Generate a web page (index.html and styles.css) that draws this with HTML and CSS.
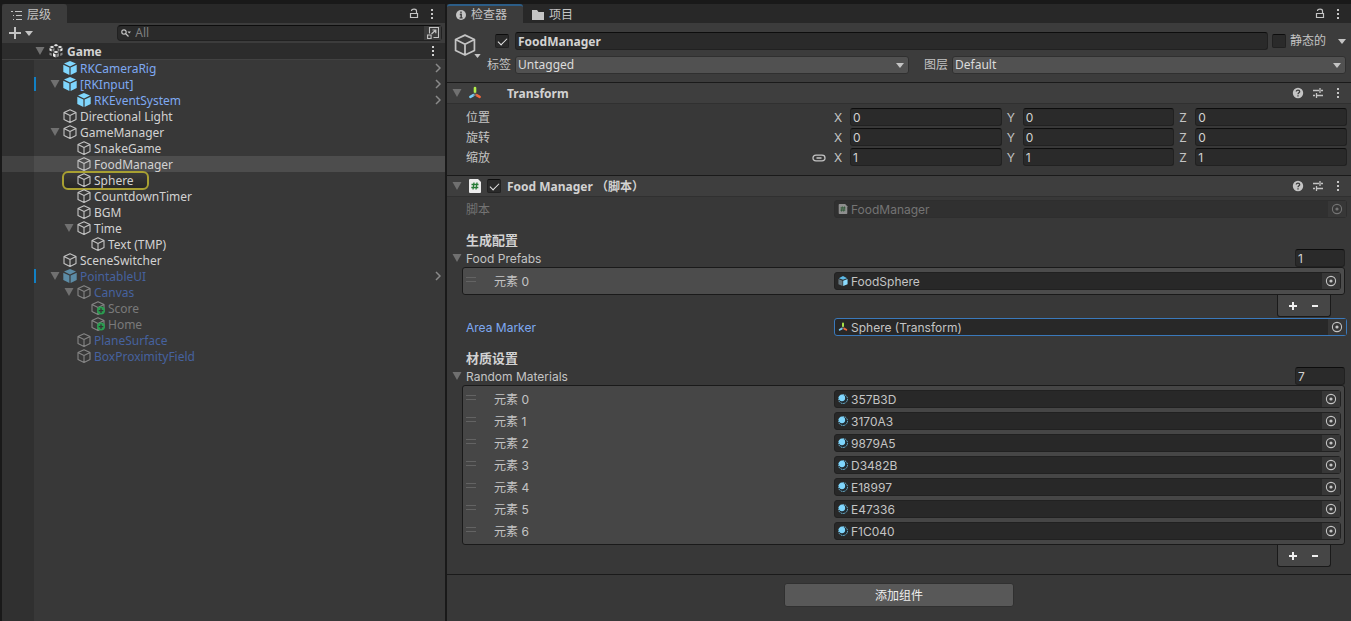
FILE: index.html
```html
<!DOCTYPE html>
<html lang="zh-CN">
<head>
  <meta charset="UTF-8">
  <title>Game</title>
  <meta name="viewport" content="width=device-width, initial-scale=1.0">
  <link rel="stylesheet" href="styles.css">
</head>
<body>
  <!-- shared icons -->
  <svg class="sprite" aria-hidden="true">
    <symbol id="i-tri" viewBox="0 0 10 10"><path d="M0.5 1h9L5 9z" fill="currentColor"/></symbol>
    <symbol id="i-down" viewBox="0 0 8 5"><path d="M0 0h8L4 5z" fill="currentColor"/></symbol>
    <symbol id="i-cube" viewBox="0 0 14 14"><path d="M7 0.7l6 2.8v7L7 13.4 1 10.5v-7zM1 3.5l6 3 6-3M7 6.5v6.9" fill="none" stroke="currentColor" stroke-width="1.1" stroke-linejoin="round"/></symbol>
    <symbol id="i-prefab" viewBox="0 0 14 14"><path d="M7 0l6 2.6-6 2.9-6-2.9z" fill="currentColor"/><path d="M0.3 3.7l6.1 2.9V14l-6.1-2.9zM13.7 3.7L7.6 6.6V14l6.1-2.9z" fill="currentColor"/></symbol>
    <symbol id="i-added" viewBox="0 0 14 14"><use href="#i-cube"/><circle cx="10" cy="9.6" r="4" fill="#2a9d50"/><path d="M10 7.3v4.6M7.7 9.6h4.6" stroke="#343434" stroke-width="1.3"/></symbol>
    <symbol id="i-scene" viewBox="0 0 14 14"><path d="M7 0l2.500 1.200L7 2.500 4.500 1.200zM4 8l3-1.300L10 8 7 9.300zM0.500 3L3 1.800 5.500 3 3 4.300zM8.500 3L11 1.800 13.500 3 11 4.300z" fill="#e4e4e4"/><path d="M0.500 4l2.200 1.100v2.500L0.500 6.500zM13.500 4l-2.200 1.100v2.500l2.200-1.100zM4 9l2.600 1.200v3.300L4 12.300z" fill="#f0f0f0"/><path d="M5.500 4L3.500 5.100v2.500l2-1.100zM8.500 4l2 1.100v2.500l-2-1.100zM10 9l-2.600 1.200v3.300l2.600-1.200zM0.500 8.500l2.300 1.100v2.400L0.500 11zM13.500 8.500l-2.300 1.100v2.400l2.300-1z" fill="#888"/></symbol>
    <symbol id="i-dots" viewBox="0 0 4 12"><path d="M1 1h2v2H1zM1 5h2v2H1zM1 9h2v2H1z" fill="currentColor"/></symbol>
    <symbol id="i-lock" viewBox="0 0 10 12"><path d="M1.500 5.500h7v4h-7zM2.500 3C2.500 0.500 7.500 0.500 7.500 3v2.500" fill="none" stroke="currentColor" stroke-width="1.200"/></symbol>
    <symbol id="i-next" viewBox="0 0 6 10"><path d="M1 1l4 4-4 4" fill="none" stroke="currentColor" stroke-width="1.500"/></symbol>
    <symbol id="i-axes" viewBox="0 0 14 14"><path d="M7 2v4" stroke="#b4f04a" stroke-width="2.600" stroke-linecap="round"/><path d="M5.400 9.200L2.400 10.800" stroke="#78cdf5" stroke-width="2.600" stroke-linecap="round"/><path d="M8.600 9.200l3 1.600" stroke="#f4683c" stroke-width="2.600" stroke-linecap="round"/><path d="M7 6v2.300l-2 1.200M7 8.300l2 1.200" fill="none" stroke="#777" stroke-width="0.600"/></symbol>
    <symbol id="i-script" viewBox="0 0 12 14"><path d="M0 1q0-1 1-1h8l3 3v10q0 1-1 1H1q-1 0-1-1z" fill="#ececec"/><path d="M5 3.500L4 10.500M8 3.500L7 10.500M2.500 5.500h7M2.300 8.500h7" stroke="#267a35" stroke-width="1.300"/></symbol>
    <symbol id="i-help" viewBox="0 0 12 12"><circle cx="6" cy="6" r="5.200" fill="currentColor"/><path d="M4.300 4.600C4.300 2.500 7.700 2.600 7.700 4.600 7.700 5.900 6 5.800 6 7.300M6 8.200v1.300" fill="none" stroke="#3c3c3c" stroke-width="1.300"/></symbol>
    <symbol id="i-preset" viewBox="0 0 12 12"><path d="M1 3.500h6M9 3.500h2M8 1v5M1 8.500h2M5 8.500h6M4.500 6v5" fill="none" stroke="currentColor" stroke-width="1.300"/></symbol>
    <symbol id="i-pick" viewBox="0 0 12 12"><circle cx="6" cy="6" r="4.600" fill="none" stroke="currentColor" stroke-width="1.100"/><circle cx="6" cy="6" r="1.600" fill="currentColor"/></symbol>
    <symbol id="i-material" viewBox="0 0 12 12"><circle cx="6" cy="6" r="5.400" fill="#202a30" stroke="#7fd6fd" stroke-width="1" stroke-dasharray="2 1"/><circle cx="4.800" cy="4.800" r="3.800" fill="#7fd6fd"/></symbol>
    <symbol id="i-model" viewBox="0 0 12 12"><path d="M1 2.600L6 0l5 2.600-5 2z" fill="#5db9e6"/><path d="M0.500 3.500l5 2.200V12l-5-2.200z" fill="#66757c"/><path d="M6.200 5.700l5.300-2.200v6.300L6.200 12z" fill="#8bdcff"/></symbol>
    <symbol id="i-link" viewBox="0 0 14 8"><path d="M6 1.200H4Q1 1.200 1 4t3 2.800h2M8 1.200h2q3 0 3 2.800t-3 2.800H8M6 1.200h2M6 6.800h2M4.500 4h5" fill="none" stroke="currentColor" stroke-width="1.300"/></symbol>
    <symbol id="i-plus" viewBox="0 0 10 10"><path d="M5 1v8M1 5h8" stroke="currentColor" stroke-width="2"/></symbol>
    <symbol id="i-minus" viewBox="0 0 10 10"><path d="M2 5h6" stroke="currentColor" stroke-width="2"/></symbol>
  </svg>

  <div class="editor">
    <aside class="panel hierarchy">
      <div class="tabbar">
        <button class="tab active">
          <svg width="11" height="10" viewBox="0 0 11 10"><path d="M0 1.500h2M4 1.500h7M2 5.500h1M5 5.500h6M2 9.500h1M5 9.500h6" stroke="currentColor" stroke-width="1"/></svg>
          层级
        </button>
        <div class="tab-tools">
          <button aria-label="Lock"><svg width="10" height="12"><use href="#i-lock"/></svg></button>
          <button aria-label="Menu"><svg width="4" height="12"><use href="#i-dots"/></svg></button>
        </div>
      </div>

      <div class="toolbar">
        <button class="create" aria-label="Create">
          <svg width="12" height="12" viewBox="0 0 12 12"><path d="M6 0v12M0 6h12" stroke="currentColor" stroke-width="2"/></svg>
          <svg width="8" height="5"><use href="#i-down"/></svg>
        </button>
        <div class="search">
          <svg width="10" height="8" viewBox="0 0 10 8"><circle cx="3" cy="3" r="2.200" fill="none" stroke="currentColor" stroke-width="1.200"/><path d="M4.500 4.500L7.500 7.500" stroke="currentColor" stroke-width="1.300"/><path d="M6.500 2.500h3.500L8.200 4.500z" fill="currentColor"/></svg>
          <input type="text" placeholder="All" aria-label="Search">
          <button aria-label="Search window">
            <svg width="12" height="12" viewBox="0 0 12 12"><path d="M2.500 6.500v-6h9v10h-5" fill="none" stroke="currentColor" stroke-width="1.100"/><path d="M0.600 8h3.500v3.500H0.600z" fill="none" stroke="currentColor" stroke-width="1.100"/><path d="M4.500 7l4.300-4M5.500 3h3.300v3.300" fill="none" stroke="currentColor" stroke-width="1.200"/></svg>
          </button>
        </div>
      </div>

      <div class="scene">
        <svg class="fold" width="10" height="10"><use href="#i-tri"/></svg>
        <svg width="14" height="14"><use href="#i-scene"/></svg>
        <span>Game</span>
        <button aria-label="Scene menu"><svg width="4" height="12"><use href="#i-dots"/></svg></button>
      </div>

      <ul class="tree">
        <li class="prefab l1"><i class="fold"></i><svg class="icon"><use href="#i-prefab"/></svg><span>RKCameraRig</span><svg class="next"><use href="#i-next"/></svg></li>
        <li class="prefab l1 changed"><svg class="fold"><use href="#i-tri"/></svg><svg class="icon"><use href="#i-prefab"/></svg><span>[RKInput]</span><svg class="next"><use href="#i-next"/></svg></li>
        <li class="prefab l2"><i class="fold"></i><svg class="icon"><use href="#i-prefab"/></svg><span>RKEventSystem</span><svg class="next"><use href="#i-next"/></svg></li>
        <li class="l1"><i class="fold"></i><svg class="icon"><use href="#i-cube"/></svg><span>Directional Light</span></li>
        <li class="l1"><svg class="fold"><use href="#i-tri"/></svg><svg class="icon"><use href="#i-cube"/></svg><span>GameManager</span></li>
        <li class="l2"><i class="fold"></i><svg class="icon"><use href="#i-cube"/></svg><span>SnakeGame</span></li>
        <li class="l2 selected"><i class="fold"></i><svg class="icon"><use href="#i-cube"/></svg><span>FoodManager</span></li>
        <li class="l2 pinged"><i class="fold"></i><svg class="icon"><use href="#i-cube"/></svg><span>Sphere</span></li>
        <li class="l2"><i class="fold"></i><svg class="icon"><use href="#i-cube"/></svg><span>CountdownTimer</span></li>
        <li class="l2"><i class="fold"></i><svg class="icon"><use href="#i-cube"/></svg><span>BGM</span></li>
        <li class="l2"><svg class="fold"><use href="#i-tri"/></svg><svg class="icon"><use href="#i-cube"/></svg><span>Time</span></li>
        <li class="l3"><i class="fold"></i><svg class="icon"><use href="#i-cube"/></svg><span>Text (TMP)</span></li>
        <li class="l1"><i class="fold"></i><svg class="icon"><use href="#i-cube"/></svg><span>SceneSwitcher</span></li>
        <li class="prefab off l1 changed"><svg class="fold"><use href="#i-tri"/></svg><svg class="icon"><use href="#i-prefab"/></svg><span>PointableUI</span><svg class="next"><use href="#i-next"/></svg></li>
        <li class="child off l2"><svg class="fold"><use href="#i-tri"/></svg><svg class="icon"><use href="#i-cube"/></svg><span>Canvas</span></li>
        <li class="off l3"><i class="fold"></i><svg class="icon"><use href="#i-added"/></svg><span>Score</span></li>
        <li class="off l3"><i class="fold"></i><svg class="icon"><use href="#i-added"/></svg><span>Home</span></li>
        <li class="child off l2"><i class="fold"></i><svg class="icon"><use href="#i-cube"/></svg><span>PlaneSurface</span></li>
        <li class="child off l2"><i class="fold"></i><svg class="icon"><use href="#i-cube"/></svg><span>BoxProximityField</span></li>
      </ul>
    </aside>

    <main class="panel inspector">
      <div class="tabbar">
        <button class="tab active focused">
          <svg width="10" height="10" viewBox="0 0 10 10"><circle cx="5" cy="5" r="5" fill="currentColor"/><path d="M5 1.500v1.700M3.800 4.500h1.400v3.300M3.600 7.900h3" fill="none" stroke="#3c3c3c" stroke-width="1.400"/></svg>
          检查器
        </button>
        <button class="tab">
          <svg width="12" height="10" viewBox="0 0 12 10"><path d="M0 0h5l1.500 2H12v8H0z" fill="currentColor"/></svg>
          项目
        </button>
        <div class="tab-tools">
          <button aria-label="Lock"><svg width="10" height="12"><use href="#i-lock"/></svg></button>
          <button aria-label="Menu"><svg width="4" height="12"><use href="#i-dots"/></svg></button>
        </div>
      </div>

      <header class="object-header">
        <button class="object-icon" aria-label="Icon">
          <svg class="big" width="22" height="22"><use href="#i-cube"/></svg>
          <svg class="arrow" width="7" height="4"><use href="#i-down"/></svg>
        </button>
        <div class="object-main">
          <div class="name-row">
            <input type="checkbox" aria-label="Active" checked>
            <input type="text" class="field name" aria-label="Name" value="FoodManager">
            <input type="checkbox" id="static">
            <label for="static">静态的</label>
            <button aria-label="Static options"><svg width="8" height="5"><use href="#i-down"/></svg></button>
          </div>
          <div class="tag-row">
            <label for="tag">标签</label>
            <div class="dropdown">
              <select id="tag"><option>Untagged</option></select>
              <svg width="8" height="5"><use href="#i-down"/></svg>
            </div>
            <label for="layer">图层</label>
            <div class="dropdown">
              <select id="layer"><option>Default</option></select>
              <svg width="8" height="5"><use href="#i-down"/></svg>
            </div>
          </div>
        </div>
      </header>

      <section class="component">
        <div class="component-header">
          <svg class="fold" width="10" height="10"><use href="#i-tri"/></svg>
          <svg class="type" width="14" height="14"><use href="#i-axes"/></svg>
          <h2>Transform</h2>
          <button aria-label="Help"><svg width="12" height="12"><use href="#i-help"/></svg></button>
          <button aria-label="Presets"><svg width="12" height="12"><use href="#i-preset"/></svg></button>
          <button aria-label="Menu"><svg width="4" height="12"><use href="#i-dots"/></svg></button>
        </div>
        <div class="component-body transform">
          <div class="property">
            <span>位置</span>
            <div class="vector">
              <label for="px">X</label><input class="field" id="px" value="0">
              <label for="py">Y</label><input class="field" id="py" value="0">
              <label for="pz">Z</label><input class="field" id="pz" value="0">
            </div>
          </div>
          <div class="property">
            <span>旋转</span>
            <div class="vector">
              <label for="rx">X</label><input class="field" id="rx" value="0">
              <label for="ry">Y</label><input class="field" id="ry" value="0">
              <label for="rz">Z</label><input class="field" id="rz" value="0">
            </div>
          </div>
          <div class="property">
            <span class="linked">缩放 <svg width="14" height="8"><use href="#i-link"/></svg></span>
            <div class="vector">
              <label for="sx">X</label><input class="field" id="sx" value="1">
              <label for="sy">Y</label><input class="field" id="sy" value="1">
              <label for="sz">Z</label><input class="field" id="sz" value="1">
            </div>
          </div>
        </div>
      </section>

      <section class="component">
        <div class="component-header">
          <svg class="fold" width="10" height="10"><use href="#i-tri"/></svg>
          <svg class="type" width="14" height="14"><use href="#i-script"/></svg>
          <input type="checkbox" aria-label="Enabled" checked>
          <h2>Food Manager （脚本）</h2>
          <button aria-label="Help"><svg width="12" height="12"><use href="#i-help"/></svg></button>
          <button aria-label="Presets"><svg width="12" height="12"><use href="#i-preset"/></svg></button>
          <button aria-label="Menu"><svg width="4" height="12"><use href="#i-dots"/></svg></button>
        </div>
        <div class="component-body">
          <div class="property disabled">
            <label for="script">脚本</label>
            <div class="object-field"><svg><use href="#i-script"/></svg><input id="script" value="FoodManager" readonly><button aria-label="Select"><svg><use href="#i-pick"/></svg></button></div>
          </div>

          <h3>生成配置</h3>
          <div class="foldout">
            <svg class="fold" width="10" height="10"><use href="#i-tri"/></svg>
            <label for="prefab-count">Food Prefabs</label>
            <input class="field count" id="prefab-count" value="1">
          </div>
          <div class="list single">
            <div class="item">
              <label for="p0">元素 0</label>
              <div class="object-field"><svg><use href="#i-model"/></svg><input id="p0" value="FoodSphere" readonly><button aria-label="Select"><svg><use href="#i-pick"/></svg></button></div>
            </div>
          </div>
          <div class="list-footer">
            <button aria-label="Add"><svg width="10" height="10"><use href="#i-plus"/></svg></button>
            <button aria-label="Remove"><svg width="10" height="10"><use href="#i-minus"/></svg></button>
          </div>

          <div class="property override">
            <label for="area">Area Marker</label>
            <div class="object-field"><svg><use href="#i-axes"/></svg><input id="area" value="Sphere (Transform)" readonly><button aria-label="Select"><svg><use href="#i-pick"/></svg></button></div>
          </div>

          <h3>材质设置</h3>
          <div class="foldout">
            <svg class="fold" width="10" height="10"><use href="#i-tri"/></svg>
            <label for="material-count">Random Materials</label>
            <input class="field count" id="material-count" value="7">
          </div>
          <div class="list">
            <div class="item">
              <label for="m0">元素 0</label>
              <div class="object-field"><svg><use href="#i-material"/></svg><input id="m0" value="357B3D" readonly><button aria-label="Select"><svg><use href="#i-pick"/></svg></button></div>
            </div>
            <div class="item">
              <label for="m1">元素 1</label>
              <div class="object-field"><svg><use href="#i-material"/></svg><input id="m1" value="3170A3" readonly><button aria-label="Select"><svg><use href="#i-pick"/></svg></button></div>
            </div>
            <div class="item">
              <label for="m2">元素 2</label>
              <div class="object-field"><svg><use href="#i-material"/></svg><input id="m2" value="9879A5" readonly><button aria-label="Select"><svg><use href="#i-pick"/></svg></button></div>
            </div>
            <div class="item">
              <label for="m3">元素 3</label>
              <div class="object-field"><svg><use href="#i-material"/></svg><input id="m3" value="D3482B" readonly><button aria-label="Select"><svg><use href="#i-pick"/></svg></button></div>
            </div>
            <div class="item">
              <label for="m4">元素 4</label>
              <div class="object-field"><svg><use href="#i-material"/></svg><input id="m4" value="E18997" readonly><button aria-label="Select"><svg><use href="#i-pick"/></svg></button></div>
            </div>
            <div class="item">
              <label for="m5">元素 5</label>
              <div class="object-field"><svg><use href="#i-material"/></svg><input id="m5" value="E47336" readonly><button aria-label="Select"><svg><use href="#i-pick"/></svg></button></div>
            </div>
            <div class="item">
              <label for="m6">元素 6</label>
              <div class="object-field"><svg><use href="#i-material"/></svg><input id="m6" value="F1C040" readonly><button aria-label="Select"><svg><use href="#i-pick"/></svg></button></div>
            </div>
          </div>
          <div class="list-footer">
            <button aria-label="Add"><svg width="10" height="10"><use href="#i-plus"/></svg></button>
            <button aria-label="Remove"><svg width="10" height="10"><use href="#i-minus"/></svg></button>
          </div>
        </div>
      </section>

      <button class="add-component">添加组件</button>
    </main>
  </div>
</body>
</html>
```
FILE: styles.css
```css
:root {
  --bg: #383838;
  --bg-dark: #282828;
  --bg-header: #3e3e3e;
  --field: #2a2a2a;
  --line: #1a1a1a;
  --border: #212121;
  --text: #c4c4c4;
  --bright: #d2d2d2;
  --dim: #747474;
  --prefab: #7ea9f2;
  --ui-font: 'Noto Sans', 'Noto Sans CJK SC', sans-serif;
  --label-font: Inter, 'Noto Sans CJK SC', sans-serif;
}

*, *::before, *::after {
  box-sizing: border-box;
}

body {
  margin: 0;
  background: #191919;
  color: var(--text);
  font-family: var(--label-font);
  font-size: 12px;
  line-height: 16px;
}

svg {
  display: block;
  flex: none;
}

.sprite {
  position: absolute;
  width: 0;
  height: 0;
}

button {
  display: flex;
  align-items: center;
  justify-content: center;
  flex: none;
  padding: 0;
  border: 0;
  background: none;
  color: inherit;
  font: inherit;
}

input, select {
  min-width: 0;
  margin: 0;
  color: inherit;
  font: inherit;
  outline: none;
}

.editor {
  display: grid;
  grid-template-columns: 443fr 904fr;
  gap: 2px;
  min-height: 100vh;
  padding: 4px 0 0 2px;
}

.panel {
  display: flex;
  flex-direction: column;
  min-width: 0;
  background: var(--bg);
}

/* tabs */
.tabbar {
  display: flex;
  height: 19px;
  background: var(--bg-dark);
}

.tab {
  gap: 5px;
  padding: 2px 16px 0 9px;
  font-family: var(--ui-font);
}

.tab.active {
  background: #3c3c3c;
  border-radius: 3px 3px 0 0;
}

.tab.focused {
  padding-top: 0;
  border-top: 2px solid #2c5d87;
}

.tab-tools {
  display: flex;
  gap: 11px;
  margin-left: auto;
  padding-right: 11px;
}

/* hierarchy */
.toolbar {
  display: flex;
  align-items: center;
  justify-content: space-between;
  height: 20px;
  padding: 0 3px 0 7px;
  background: #3c3c3c;
}

.create {
  gap: 4px;
}

.search {
  display: flex;
  align-items: center;
  flex: 0 0 75%;
  height: 16px;
  padding-left: 3px;
  border: 1px solid var(--border);
  border-top-color: #0d0d0d;
  border-radius: 4px;
  background: var(--field);
}

.search input {
  flex: 1;
  height: 14px;
  padding: 0 4px;
  border: 0;
  background: none;
  font-family: var(--ui-font);
}

.search input::placeholder {
  color: #808080;
}

.search button {
  width: 17px;
  height: 14px;
  background: #3c3c3c;
}

.scene {
  display: flex;
  align-items: center;
  gap: 4px;
  height: 17px;
  padding: 0 10px 0 33px;
  border-bottom: 1px solid #424242;
  background: #2c2c2c;
  color: var(--bright);
  font: bold 12px/16px var(--ui-font);
}

.scene span,
.tree span {
  padding-top: 2px;
}

.scene button {
  margin-left: auto;
}

.fold {
  flex: none;
  width: 10px;
  height: 10px;
  color: #707070;
}

.tree {
  flex: 1;
  margin: 0;
  padding: 0;
  list-style: none;
  background: linear-gradient(to right, #303030 32px, transparent 32px);
  font: 12px/16px var(--ui-font);
}

.tree li {
  position: relative;
  display: flex;
  align-items: center;
  gap: 3px;
  height: 16px;
  padding-right: 4px;
  color: var(--bright);
}

.tree .l1 { padding-left: 48px; }
.tree .l2 { padding-left: 62px; }
.tree .l3 { padding-left: 76px; }

.icon {
  width: 14px;
  height: 14px;
  color: #c4c4c4;
}

.next {
  width: 6px;
  height: 10px;
  margin-left: auto;
  color: #8a8a8a;
}

.tree .prefab { color: var(--prefab); }
.prefab .icon { color: #7fd6fd; }
.tree .off { color: #7a7a7a; }
.off .icon { color: #858585; }
.tree .prefab.off, .tree .child.off { color: #46629f; }
.prefab.off .icon { color: #5c8ca6; }

.tree .selected {
  background: linear-gradient(to right, #424242 32px, #4d4d4d 32px);
}

.changed::before {
  content: '';
  position: absolute;
  left: 32px;
  top: 1px;
  width: 2px;
  height: 14px;
  background: #1180c4;
}

/* highlight frame around the pinged object */
.pinged::before {
  content: '';
  position: absolute;
  left: 60px;
  top: -1px;
  width: 87px;
  height: 19px;
  border: 2px solid #a8a032;
  border-radius: 6px;
  background: linear-gradient(#393939, #272727);
}

.pinged .icon, .pinged span {
  position: relative;
}

/* inspector */
.object-header {
  display: flex;
  gap: 6px;
  padding: 9px 5px 8px 7px;
  border-bottom: 1px solid var(--line);
  background: #3c3c3c;
  font-family: var(--ui-font);
}

.object-icon {
  position: relative;
  align-self: flex-start;
  width: 27px;
  height: 26px;
  justify-content: flex-start;
}

.object-icon .arrow {
  position: absolute;
  right: 0;
  bottom: 0;
}

.object-main {
  display: flex;
  flex-direction: column;
  flex: 1;
  gap: 6px;
  min-width: 0;
}

.name-row, .tag-row {
  display: flex;
  align-items: center;
  gap: 4px;
  height: 18px;
}

.name-row {
  padding-left: 8px;
}

.name-row .name {
  flex: 1;
  margin-left: 2px;
  font: bold 12px/16px var(--ui-font);
}

.name-row button {
  width: 16px;
  justify-content: flex-end;
}

input[type="checkbox"] {
  display: grid;
  place-items: center;
  flex: none;
  appearance: none;
  width: 14px;
  height: 14px;
  border: 1px solid var(--border);
  border-top-color: #0d0d0d;
  border-radius: 2px;
  background: var(--field);
}

input[type="checkbox"]:checked::after {
  content: '';
  width: 9px;
  height: 5px;
  margin-bottom: 2px;
  border: solid #e8e8e8;
  border-width: 0 0 1px 1px;
  transform: rotate(-45deg);
}

.field {
  height: 18px;
  padding: 0 2px;
  border: 1px solid var(--border);
  border-top-color: #0d0d0d;
  border-radius: 3px;
  background: var(--field);
  color: var(--bright);
}

.dropdown {
  display: flex;
  position: relative;
  flex: 1;
  align-items: center;
}

.dropdown + label {
  margin-left: 11px;
}

.dropdown select {
  width: 100%;
  height: 18px;
  padding: 0 2px;
  appearance: none;
  border: 1px solid #303030;
  border-radius: 3px;
  background: #515151;
  color: #dcdcdc;
}

.dropdown svg {
  position: absolute;
  right: 5px;
  pointer-events: none;
}

.component {
  border-bottom: 1px solid var(--line);
}

.component-header {
  display: flex;
  align-items: center;
  height: 21px;
  padding: 0 11px 0 5px;
  border-bottom: 1px solid #303030;
  background: var(--bg-header);
}

.component-header .type {
  margin: 0 5px 0 6px;
}

.component-header h2 {
  flex: 1;
  margin: 0 0 0 20px;
  padding-top: 2px;
  color: var(--bright);
  font: bold 12px/16px var(--ui-font);
}

.component-header input + h2 {
  margin-left: 6px;
}

.component-header button {
  margin-left: 8px;
}

.component-header button:last-child {
  margin-left: 12px;
}

.component-body {
  padding: 3px 4px 7px 5px;
}

.property {
  display: grid;
  grid-template-columns: 368fr 513fr;
  align-items: center;
  height: 18px;
  padding-left: 14px;
}

.property > span,
.property > label,
.foldout label,
.vector label {
  padding-top: 2px;
}

.transform {
  display: grid;
  gap: 2px;
  padding: 4px 4px 9px 5px;
}

.linked {
  display: flex;
  align-items: center;
  justify-content: space-between;
  padding-right: 8px;
}

.vector {
  display: grid;
  grid-template-columns: 11px 1fr 11px 1fr 11px 1fr;
  gap: 5px;
}

.vector .field, .count {
  padding-top: 1px;
}

.component-body h3 {
  height: 18px;
  margin: 13px 0 0 14px;
  color: var(--bright);
  font-size: 13px;
  line-height: 18px;
}

.foldout {
  display: flex;
  align-items: center;
  height: 18px;
  padding-right: 2px;
}

.foldout label {
  flex: 1;
  padding-left: 4px;
}

.count {
  width: 50px;
}

.list {
  display: grid;
  gap: 4px;
  margin: 0 2px 0 10px;
  padding: 4px 3px 4px 0;
  border: 1px solid var(--line);
  border-radius: 3px;
  background: #464646;
}

.list.single {
  background: #4c4c4c;
}

.item {
  display: grid;
  grid-template-columns: 371fr 507fr;
  align-items: center;
}

.item label {
  display: flex;
  align-items: center;
  padding-top: 2px;
}

/* drag handle */
.item label::before {
  content: '';
  width: 10px;
  height: 5px;
  margin: 0 18px 6px 3px;
  border: solid #636363;
  border-width: 1px 0;
}

.object-field {
  display: flex;
  align-items: center;
  height: 18px;
  padding-left: 3px;
  border: 1px solid var(--border);
  border-radius: 3px;
  background: var(--bg-dark);
}

.object-field > svg {
  width: 10px;
  height: 10px;
}

.object-field input {
  flex: 1;
  height: 16px;
  padding: 2px 3px 0;
  border: 0;
  background: none;
}

.object-field button {
  width: 18px;
  height: 16px;
  background: #373737;
}

.object-field button svg {
  width: 12px;
  height: 12px;
}

.disabled {
  color: var(--dim);
}

.disabled .object-field {
  border-color: #2e2e2e;
  background: #303030;
}

.disabled .object-field > svg {
  opacity: 0.5;
}

.override label {
  color: var(--prefab);
}

.override .object-field {
  border-color: #3a79bb;
}

.list-footer {
  display: flex;
  justify-content: center;
  gap: 12px;
  width: 54px;
  height: 22px;
  margin: 0 16px 0 auto;
  border: solid var(--line);
  border-width: 0 1px 1px;
  border-radius: 0 0 3px 3px;
  background: #464646;
  color: #eee;
}

.list-footer + .property {
  margin-top: 1px;
}

.add-component {
  align-self: center;
  width: 230px;
  height: 24px;
  margin-top: 8px;
  padding-top: 1px;
  border: 1px solid #303030;
  border-radius: 3px;
  background: #585858;
  color: #eee;
}
```
